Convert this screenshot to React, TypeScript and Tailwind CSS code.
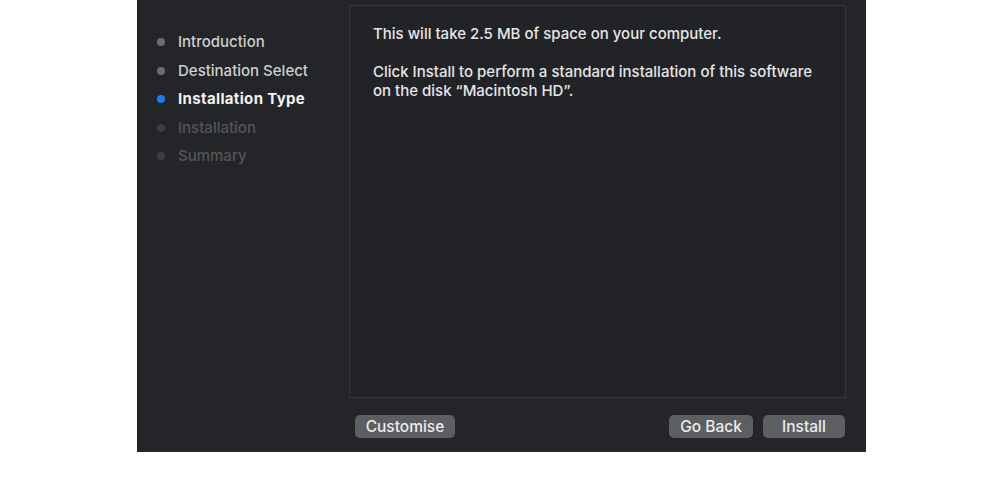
import React from 'react';

const steps = [
  { label: 'Introduction', state: 'done' },
  { label: 'Destination Select', state: 'done' },
  { label: 'Installation Type', state: 'active' },
  { label: 'Installation', state: 'todo' },
  { label: 'Summary', state: 'todo' },
];

export default function App() {
  return (
    <div className="w-[1000px] h-[499px] bg-white font-['Inter','Liberation_Sans',sans-serif]">
      <div className="ml-[137px] w-[729px] h-[452px] bg-[#232528] flex">
        {/* Sidebar */}
        <div className="w-[212px] pt-[28px] pl-[20px] flex flex-col">
          {steps.map((s) => (
            <div key={s.label} className="h-[28.5px] flex items-center gap-[13px]">
              <span
                className={
                  s.state === 'active'
                    ? 'w-[8px] h-[8px] rounded-full bg-[#1b7df6]'
                    : s.state === 'done'
                    ? 'w-[8px] h-[8px] rounded-full bg-[#6a6c6e]'
                    : 'w-[8px] h-[8px] rounded-full bg-[#3c3e40]'
                }
              />
              <span
                className={
                  s.state === 'active'
                    ? 'text-[15px] font-bold text-[#f2f2f2] tracking-[0.35px]'
                    : s.state === 'done'
                    ? 'text-[15px] font-medium text-[#cfcfcf]'
                    : 'text-[15px] font-medium text-[#535557]'
                }
              >
                {s.label}
              </span>
            </div>
          ))}
        </div>

        {/* Main */}
        <div className="flex flex-col pt-[5px]">
          <div className="w-[497px] h-[393px] bg-[#212326] border border-[#36383b] pt-[18px] pl-[23px] text-[15px] font-medium text-[#e6e6e6] leading-[19px]">
            <p>This will take 2.5 MB of space on your computer.</p>
            <p className="mt-[19px]">
              Click Install to perform a standard installation of this software
              <br />
              on the disk “Macintosh HD”.
            </p>
          </div>
          <div className="flex items-center pt-[17px] pl-[6px] pr-[1px]">
            <button className="w-[100px] h-[23px] rounded-[5px] bg-[#5c5e61] text-[15.5px] font-medium text-[#ececec] leading-none">
              Customise
            </button>
            <div className="flex-1" />
            <button className="w-[84px] h-[23px] rounded-[5px] bg-[#5c5e61] text-[15.5px] font-medium text-[#ececec] leading-none">
              Go Back
            </button>
            <button className="ml-[10px] w-[82px] h-[23px] rounded-[5px] bg-[#5c5e61] text-[15.5px] font-medium text-[#ececec] leading-none">
              Install
            </button>
          </div>
        </div>
      </div>
    </div>
  );
}
